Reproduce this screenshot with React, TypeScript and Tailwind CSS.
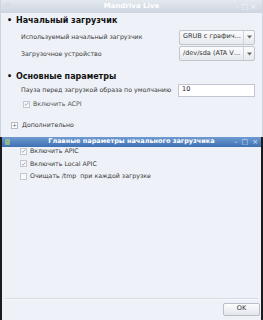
const font = "font-['DejaVu_Sans','Liberation_Sans',sans-serif]";

function Check({ checked }: { checked: boolean }) {
  return (
    <span className="flex h-[7px] w-[7px] items-center justify-center border border-[#c4c8d0] bg-[#f8f9fb]">
      {checked && (
        <svg width="6" height="6" viewBox="0 0 7 7">
          <path d="M1 3.6 L2.8 5.4 L6 1.2" fill="none" stroke="#9aa0aa" strokeWidth="1.2" />
        </svg>
      )}
    </span>
  );
}

function Combo({ label }: { label: string }) {
  return (
    <div className="flex h-[15px] w-[76px] items-center rounded-[2px] border border-[#c2c6ce] bg-gradient-to-b from-[#fbfcfd] to-[#e6e9ee] text-[6.5px] text-[#333]">
      <span className="flex-1 truncate whitespace-nowrap pl-[3px]">{label}</span>
      <span className="flex h-full w-[11px] items-center justify-center border-l border-[#d0d4da]">
        <svg width="5" height="4" viewBox="0 0 5 4">
          <path d="M0 0.5 L5 0.5 L2.5 3.5 Z" fill="#666" />
        </svg>
      </span>
    </div>
  );
}

export default function App() {
  return (
    <div className={`${font} flex h-[320px] w-[263px] flex-col bg-[#1b1c20] text-[6.25px] text-[#3a3a3a]`}>
      {/* main window */}
      <div className="flex h-[137px] flex-col border-x border-[#cfd4dc] bg-[#eef1f7]">
        <div className="relative flex h-[13px] items-center justify-center bg-gradient-to-b from-[#e4e9ef] to-[#cdd5df]">
          <span className="absolute left-[3px] top-[3px] h-[7px] w-[7px] rounded-full bg-[#d6dde4]" />
          <span className="text-[7px] font-bold text-white">Mandriva Live</span>
          <span className="absolute right-[6px] top-[2px] text-[7px] text-[#f4f6f8]">– □ ×</span>
        </div>
        <div className="flex h-[16px] items-center pl-[6px] text-[8px] font-bold text-[#111]">
          <span className="w-[9px]">•</span>Начальный загрузчик
        </div>
        <div className="flex h-[16px] items-center whitespace-nowrap pl-[20px] pr-[7px]">
          <span className="flex-1">Используемый начальный загрузчик</span>
          <Combo label="GRUB с графич..." />
        </div>
        <div className="flex h-[17px] items-center whitespace-nowrap pl-[20px] pr-[7px]">
          <span className="flex-1">Загрузочное устройство</span>
          <Combo label="/dev/sda (ATA VB..." />
        </div>
        <div className="h-[8px]" />
        <div className="flex h-[13px] items-center pl-[6px] text-[8px] font-bold text-[#111]">
          <span className="w-[9px]">•</span>Основные параметры
        </div>
        <div className="flex h-[14px] items-center whitespace-nowrap pl-[20px] pr-[7px]">
          <span className="flex-1">Пауза перед загрузкой образа по умолчанию</span>
          <div className="flex h-[13px] w-[77px] items-center border border-[#c2c6ce] bg-white pl-[3px] text-[6.5px] text-[#222]">
            10
          </div>
        </div>
        <div className="flex h-[14px] items-center gap-[3px] pl-[22px]">
          <Check checked />
          <span className="text-[#555]">Включить ACPI</span>
        </div>
        <div className="h-[9px]" />
        <div className="flex h-[10px] items-center gap-[4px] pl-[10px]">
          <span className="flex h-[7px] w-[7px] items-center justify-center border border-[#b8bcc4] bg-white text-[6px] leading-none text-[#666]">+</span>
          <span>Дополнительно</span>
        </div>
      </div>

      {/* dialog */}
      <div className="ml-[2px] mr-[2px] flex flex-1 flex-col bg-[#eef1f7] pb-[2px]">
        <div className="relative flex h-[10px] items-center justify-center bg-gradient-to-b from-[#6f9bd2] to-[#3f70b3]">
          <span className="absolute left-[3px] top-[2px] h-[6px] w-[5px] rounded-[1px] bg-[#8fb890]" />
          <span className="text-[6.5px] font-bold text-white">Главные параметры начального загрузчика</span>
          <span className="absolute right-[3px] top-[0px] flex gap-[4px] text-[7px] leading-[10px] text-[#dce6f4]">
            <span>–</span><span>□</span><span>×</span>
          </span>
        </div>
        <div className="flex flex-col gap-[4.5px] pl-[18px]">
          <div className="flex h-[8px] items-center gap-[3px]">
            <Check checked />
            <span>Включить APIC</span>
          </div>
          <div className="flex h-[8px] items-center gap-[3px]">
            <Check checked />
            <span>Включить Local APIC</span>
          </div>
          <div className="flex h-[8px] items-center gap-[3px]">
            <Check checked={false} />
            <span>Очищать /tmp&nbsp; при каждой загрузке</span>
          </div>
        </div>
        <div className="flex-1" />
        <div className="mx-[3px] h-[2px] border-t border-[#d6dae2] bg-[#f7f8fb]" />
        <div className="flex h-[18px] items-center justify-end pr-[1px]">
          <button className="h-[13px] w-[37px] rounded-[2px] border border-[#b9bec7] bg-gradient-to-b from-[#fbfcfd] to-[#e3e6ec] text-[6.5px] text-[#333]">
            OK
          </button>
        </div>
      </div>
    </div>
  );
}
